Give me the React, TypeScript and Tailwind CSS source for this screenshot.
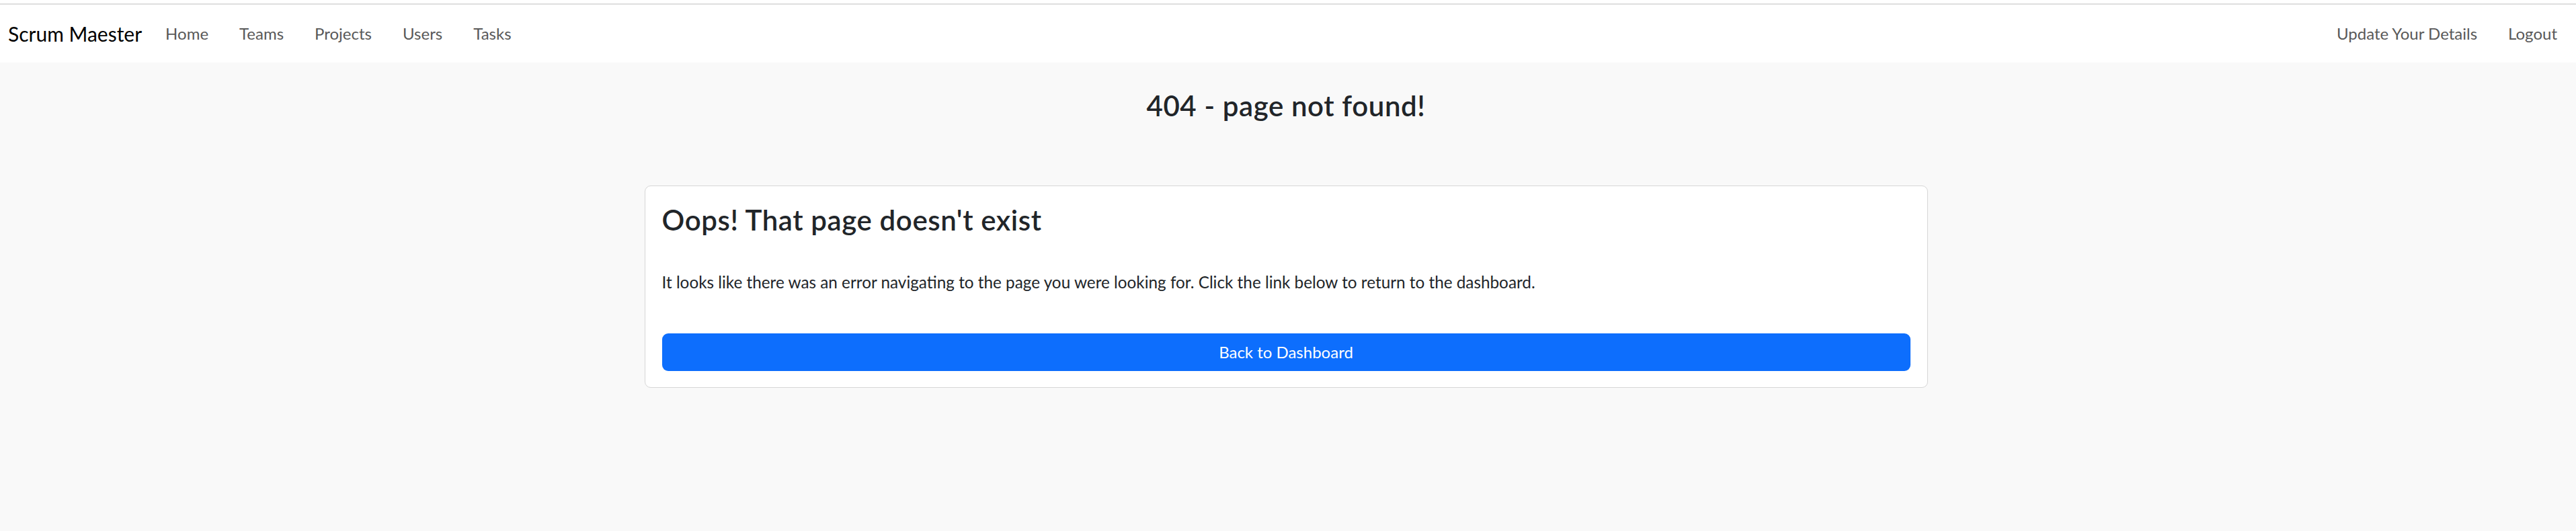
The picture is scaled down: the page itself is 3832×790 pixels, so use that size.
import React, { FC } from 'react'

const leftLinks = ['Home', 'Teams', 'Projects', 'Users', 'Tasks']
const rightLinks = ['Update Your Details', 'Logout']

const NavLink: FC<{ label: string }> = ({ label }) => (
  <a href="#" className="px-[23px] text-[24px] leading-[36px] text-[#595959]">
    {label}
  </a>
)

const App: FC = () => {
  return (
    <div className="min-h-[790px] bg-[#f9f9f9] font-['Lato',sans-serif] text-[#212529]">
      <div className="h-[5px] bg-white" />
      <div className="h-[2px] bg-[#dedede]" />
      <nav className="flex h-[86px] items-center justify-between bg-white pl-3 pr-[5px]">
        <div className="flex items-center">
          <a href="#" className="mr-[12px] text-[30px] leading-[45px] text-black">
            Scrum Maester
          </a>
          {leftLinks.map((l) => (
            <NavLink key={l} label={l} />
          ))}
        </div>
        <div className="flex items-center">
          {rightLinks.map((l) => (
            <NavLink key={l} label={l} />
          ))}
        </div>
      </nav>

      <main className="flex flex-col items-center pr-[6px]">
        <h1 className="mt-[39px] text-[42px] leading-[50px] font-semibold tracking-[0.6px]">
          404 - page not found!
        </h1>

        <div className="mt-[94px] w-[1909px] rounded-[9px] border border-[#d6d6d6] bg-white px-[25px] pt-[25px] pb-[24px]">
          <h3 className="text-[42px] leading-[50px] font-semibold tracking-[0.6px]">
            Oops! That page doesn't exist
          </h3>
          <p className="mt-[50px] text-[24.3px] leading-[36px]">
            It looks like there was an error navigating to the page you were
            looking for. Click the link below to return to the dashboard.
          </p>
          <button className="mt-[58px] flex h-[56px] w-full items-center justify-center rounded-[9px] bg-[#0d6efd] text-[24px] text-white">
            Back to Dashboard
          </button>
        </div>
      </main>
    </div>
  )
}

export default App
